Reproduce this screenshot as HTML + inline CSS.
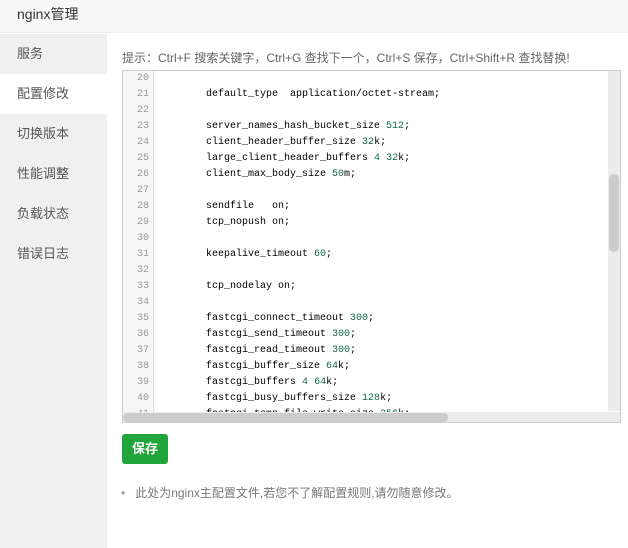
<!DOCTYPE html>
<html><head><meta charset="utf-8"><style>
body{margin:0;width:628px;height:548px;background:#fff;font-family:"Liberation Sans","Noto Sans CJK SC",sans-serif;position:relative;overflow:hidden}
.hd{position:absolute;left:0;top:0;width:628px;height:33px;background:#f8f8f8;border-bottom:1px solid #eee;font-size:14px;color:#333;line-height:28px;padding-left:17px;box-sizing:border-box}
.sb{position:absolute;left:0;top:34px;width:107px;height:514px;background:#f0f0f0}
.sb div{height:40px;line-height:40px;padding-left:17px;font-size:13px;color:#555}
.sb .on{background:#fff}
.tip{position:absolute;left:122px;top:49px;font-size:12px;color:#666}
.ed{position:absolute;left:122px;top:70px;width:499px;height:353px;border:1px solid #ccc;box-sizing:border-box;overflow:hidden;background:#fff}
.gut{position:absolute;left:0;top:0;width:30px;height:100%;background:#f7f7f7;border-right:1px solid #ddd}
.ln{position:absolute;left:0;top:0;width:26px;text-align:right;font:10px/16px "Liberation Mono",monospace;color:#999}
.code{position:absolute;left:35px;top:0;font:10px/16px "Liberation Mono",monospace;color:#000;white-space:pre}
.n{color:#164}
.vt{position:absolute;right:0;top:0;width:12px;height:340px;background:#ececec}
.vth{position:absolute;right:1px;top:103px;width:10px;height:78px;background:#ccc;border-radius:5px}
.ht{position:absolute;left:0;bottom:0;width:100%;height:10px;background:#ececec}
.hth{position:absolute;left:0;bottom:0;width:325px;height:9px;background:#ccc;border-radius:5px}
.btn{position:absolute;left:122px;top:434px;width:46px;height:30px;background:#20a53a;border-radius:3px;color:#fff;font-size:13px;font-weight:bold;line-height:30px;text-align:center}
.note{position:absolute;left:122px;top:484px;font-size:12px;color:#777}
</style></head><body>
<div class="hd">nginx管理</div>
<div class="sb"><div>服务</div><div class="on">配置修改</div><div>切换版本</div><div>性能调整</div><div>负载状态</div><div>错误日志</div></div>
<div class="tip">提示：Ctrl+F 搜索关键字，Ctrl+G 查找下一个，Ctrl+S 保存，Ctrl+Shift+R 查找替换!</div>
<div class="ed">
<div class="gut"></div>
<div class="ln">20<br>21<br>22<br>23<br>24<br>25<br>26<br>27<br>28<br>29<br>30<br>31<br>32<br>33<br>34<br>35<br>36<br>37<br>38<br>39<br>40<br>41</div>
<div class="code">&nbsp;
        default_type  application/octet-stream;

        server_names_hash_bucket_size <span class="n">512</span>;
        client_header_buffer_size <span class="n">32</span>k;
        large_client_header_buffers <span class="n">4</span> <span class="n">32</span>k;
        client_max_body_size <span class="n">50</span>m;

        sendfile   on;
        tcp_nopush on;

        keepalive_timeout <span class="n">60</span>;

        tcp_nodelay on;

        fastcgi_connect_timeout <span class="n">300</span>;
        fastcgi_send_timeout <span class="n">300</span>;
        fastcgi_read_timeout <span class="n">300</span>;
        fastcgi_buffer_size <span class="n">64</span>k;
        fastcgi_buffers <span class="n">4</span> <span class="n">64</span>k;
        fastcgi_busy_buffers_size <span class="n">128</span>k;
        fastcgi_temp_file_write_size <span class="n">256</span>k;</div>
<div class="vt"></div><div class="vth"></div>
<div class="ht"></div><div class="hth"></div>
</div>
<div class="btn">保存</div>
<div class="note"><span style="margin-left:-1px;color:#999">•</span><span style="margin-left:10px">此处为nginx主配置文件,若您不了解配置规则,请勿随意修改。</span></div>
</body></html>
